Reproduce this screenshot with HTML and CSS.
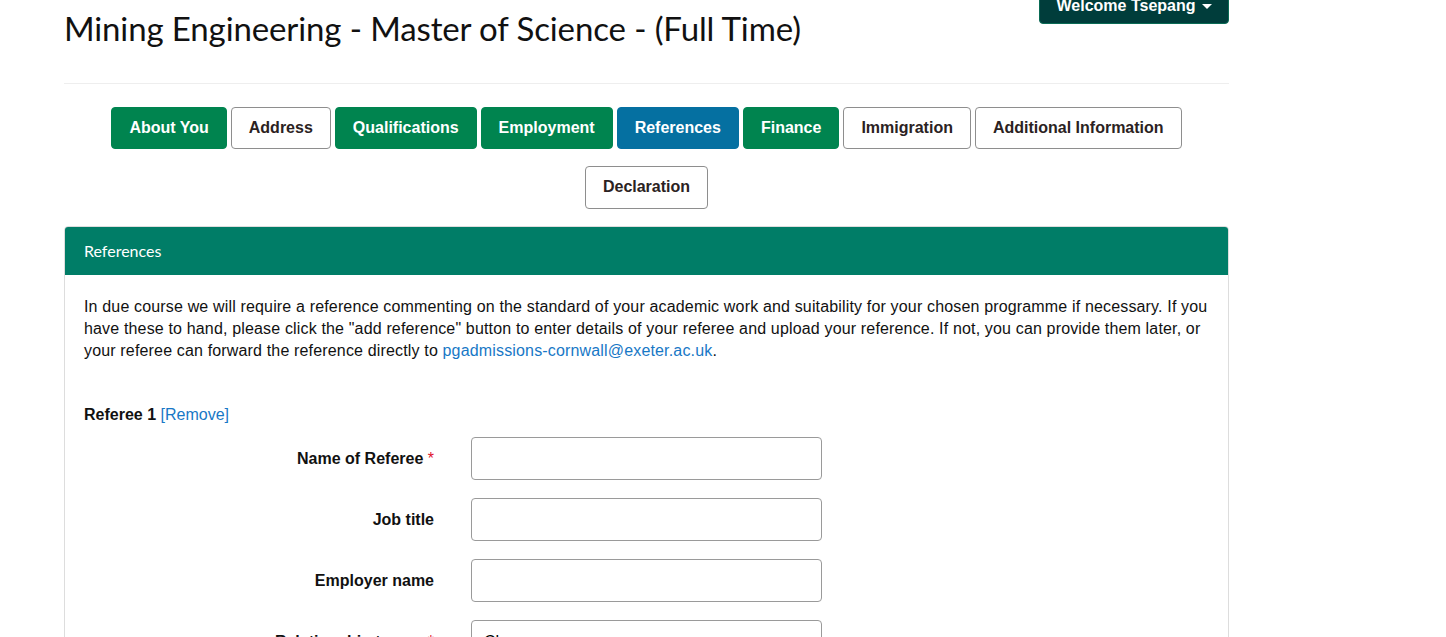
FILE: index.html
```html
<!DOCTYPE html>
<html lang="en">
<head>
<meta charset="utf-8">
<title>Mining Engineering - Application</title>
<link rel="stylesheet" href="styles.css">
</head>
<body>
<div class="container">
  <header class="page-header">
    <h1 class="title">Mining Engineering - Master of Science - (Full Time)</h1>
    <div class="user-menu">
      <button class="welcome">Welcome Tsepang <span class="caret"></span></button>
    </div>
  </header>
  <hr class="rule">
  <nav class="tabs">
    <a class="tab done" href="#">About You</a>
    <a class="tab" href="#">Address</a>
    <a class="tab done" href="#">Qualifications</a>
    <a class="tab done" href="#">Employment</a>
    <a class="tab active" href="#">References</a>
    <a class="tab done" href="#">Finance</a>
    <a class="tab" href="#">Immigration</a>
    <a class="tab" href="#">Additional Information</a>
    <a class="tab" href="#">Declaration</a>
  </nav>
  <section class="panel">
    <div class="panel-heading">References</div>
    <div class="panel-body">
      <p class="intro">In due course we will require a reference commenting on the standard of your academic work and suitability for your chosen programme if necessary. If you have these to hand, please click the "add reference" button to enter details of your referee and upload your reference. If not, you can provide them later, or your referee can forward the reference directly to <a href="#">pgadmissions-cornwall@exeter.ac.uk</a>.</p>
      <div class="referee-title"><strong>Referee 1</strong> <a href="#">[Remove]</a></div>
      <form class="form">
        <div class="row">
          <label class="label">Name of Referee <span class="req">*</span></label>
          <input class="input" type="text">
        </div>
        <div class="row">
          <label class="label">Job title</label>
          <input class="input" type="text">
        </div>
        <div class="row">
          <label class="label">Employer name</label>
          <input class="input" type="text">
        </div>
        <div class="row">
          <label class="label">Relationship to you <span class="req">*</span></label>
          <select class="input select"><option>Choose...</option></select>
        </div>
      </form>
    </div>
  </section>
</div>
</body>
</html>
```

FILE: styles.css
```css
* { box-sizing: border-box; }
html, body { margin: 0; padding: 0; background: #fff; }
body {
  font-family: "Liberation Sans", Arial, sans-serif;
  font-size: 16px;
  color: #111;
  overflow: hidden;
}
.container {
  width: 1165px;
  margin-left: 64px;
}
.page-header {
  display: flex;
  justify-content: space-between;
  align-items: flex-start;
  height: 83px;
}
.title {
  margin: 8px 0 0 0;
  font-family: "Lato", "Noto Sans", sans-serif;
  font-weight: 400;
  font-size: 33px;
  line-height: 40px;
  color: #111;
  letter-spacing: -0.12px;
}
.user-menu { margin-top: -20px; }
.welcome {
  display: flex;
  align-items: center;
  gap: 6px;
  background: #003d3b;
  color: #fff;
  border: 1px solid #0a6b55;
  border-radius: 4px;
  font-family: "Liberation Sans", Arial, sans-serif;
  font-weight: 700;
  font-size: 16px;
  height: 44px;
  width: 190px;
  padding: 8px 16px 0 16px;
  justify-content: center;
}
.caret {
  display: inline-block;
  width: 0; height: 0;
  border-left: 5px solid transparent;
  border-right: 5px solid transparent;
  border-top: 5px solid #fff;
  margin-top: 1px;
}
.rule {
  margin: 0;
  border: 0;
  border-top: 1px solid #eee;
}
.tabs {
  display: flex;
  flex-wrap: wrap;
  justify-content: center;
  gap: 17px 4px;
  margin: 23px 30px 17px 30px;
}
.tab {
  display: inline-block;
  padding: 9px 17px;
  line-height: 22px;
  font-weight: 700;
  font-size: 16px;
  text-decoration: none;
  border: 1px solid #8e8e8e;
  border-radius: 4px;
  color: #2b2222;
  background: #fff;
  height: 42px;
}
.tab:last-child { height: 43px; }
.tab.done { background: #00844f; border-color: #00844f; color: #fff; }
.tab.active { background: #0570a1; border-color: #0570a1; color: #fff; }
.panel {
  border: 1px solid #ddd;
  border-radius: 4px;
  height: 420px;
}
.panel-heading {
  background: #007d67;
  color: #fff;
  font-family: "Lato", "Noto Sans", sans-serif;
  font-size: 16px;
  height: 48px;
  padding: 15px 19px;
  border-radius: 3px 3px 0 0;
  line-height: 18px;
}
.panel-body { padding: 21px 19px 20px 19px; }
.intro {
  margin: 0;
  line-height: 22px;
  font-size: 16px;
  color: #111;
  letter-spacing: 0.16px;
}
a { color: #1878c6; text-decoration: none; }
.referee-title {
  margin-top: 42px;
  font-size: 16px;
  line-height: 22px;
}
.referee-title strong { color: #111; }
.form {
  margin-top: 11px;
  display: flex;
  flex-direction: column;
  gap: 18px;
}
.row {
  display: grid;
  grid-template-columns: 350px 351px;
  column-gap: 37px;
  align-items: center;
}
.label {
  text-align: right;
  font-weight: 700;
  font-size: 16px;
  color: #111;
}
.req { color: #e0102b; font-weight: 400; }
.input {
  height: 43px;
  border: 1px solid #9a9a9a;
  border-radius: 4px;
  background: #fff;
  font-family: "Liberation Sans", Arial, sans-serif;
  font-size: 16px;
  padding: 6px 12px;
  appearance: none;
}
```
